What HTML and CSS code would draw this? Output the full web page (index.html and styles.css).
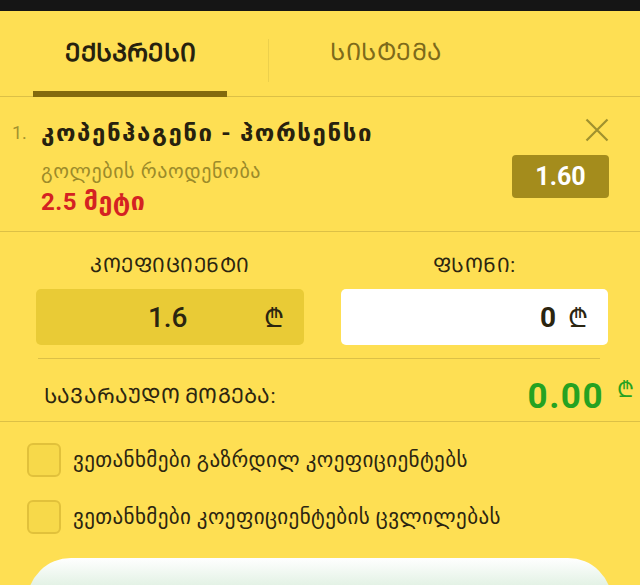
FILE: index.html
```html
<!DOCTYPE html>
<html lang="ka">
<head>
<meta charset="utf-8">
<title>Betslip</title>
<link rel="stylesheet" href="styles.css">
</head>
<body>
<div class="topbar"></div>
<div class="tabs">
  <div class="tab active"><span>ᲔᲥᲡᲞᲠᲔᲡᲘ</span></div>
  <div class="tab-sep"></div>
  <div class="tab"><span>ᲡᲘᲡᲢᲔᲛᲐ</span></div>
</div>
<div class="bet">
  <div class="bet-num">1.</div>
  <div class="bet-info">
    <div class="bet-title">კოპენჰაგენი - ჰორსენსი</div>
    <div class="bet-market">გოლების რაოდენობა</div>
    <div class="bet-pick"><span class="num">2.5</span> მეტი</div>
  </div>
  <div class="bet-side">
    <svg class="close" width="24" height="24" viewBox="0 0 24 24"><path d="M1.5 1.5 L22.5 22.5 M22.5 1.5 L1.5 22.5" stroke="#a0912e" stroke-width="2.2" fill="none"/></svg>
    <div class="odd">1.60</div>
  </div>
</div>
<div class="stake">
  <div class="fields">
    <div class="field">
      <div class="field-label">ᲙᲝᲔᲤᲘᲪᲘᲔᲜᲢᲘ</div>
      <div class="box box-odd"><span class="val">1.6</span><span class="lari">₾</span></div>
    </div>
    <div class="field">
      <div class="field-label">ᲤᲡᲝᲜᲘ:</div>
      <div class="box box-stake"><span class="val">0</span><span class="lari">₾</span></div>
    </div>
  </div>
  <div class="win">
    <span class="win-label">ᲡᲐᲕᲐᲠᲐᲣᲓᲝ ᲛᲝᲒᲔᲑᲐ:</span>
    <span class="win-val">0.00<span class="win-lari">₾</span></span>
  </div>
</div>
<div class="checks">
  <label class="check"><span class="cb"></span><span>ვეთანხმები გაზრდილ კოეფიციენტებს</span></label>
  <label class="check"><span class="cb"></span><span>ვეთანხმები კოეფიციენტების ცვლილებას</span></label>
  <div class="button"></div>
</div>
</body>
</html>
```
FILE: styles.css
```css
html, body {
  margin: 0;
  padding: 0;
}
body {
  width: 640px;
  height: 585px;
  overflow: hidden;
  background: #fedf53;
  font-family: "Roboto", "DejaVu Sans", sans-serif;
  color: #2b2510;
}
.topbar {
  height: 11px;
  background: #151515;
}
.tabs {
  display: flex;
  align-items: stretch;
  border-bottom: 1px solid #dcc046;
  box-sizing: border-box;
  height: 86px;
}
.tab {
  display: flex;
  align-items: center;
  font-size: 24px;
  color: #7d6a1a;
  padding-bottom: 6px;
}
.tab.active {
  margin-left: 33px;
  width: 194px;
  box-sizing: border-box;
  justify-content: center;
  font-size: 25px;
  font-weight: bold;
  color: #27210e;
  border-bottom: 6px solid #836a0d;
  padding-bottom: 0;
  margin-bottom: -1px;
}
.tab-sep {
  width: 1px;
  margin: 28px 0 14px 41px;
  background: #ecd04c;
}
.tab:last-child {
  margin-left: 61px;
  letter-spacing: 0.5px;
}
.bet {
  display: flex;
  height: 135px;
  border-bottom: 1px solid #dcc046;
  box-sizing: border-box;
}
.bet-num {
  width: 41px;
  padding: 22px 0 0 12px;
  box-sizing: border-box;
  font-size: 18px;
  line-height: 28px;
  color: #a3922e;
}
.bet-info {
  flex: 1;
  padding-top: 22px;
}
.bet-title {
  font-size: 24px;
  font-weight: bold;
  letter-spacing: 1.6px;
  color: #27210e;
  line-height: 28px;
}
.bet-market {
  margin-top: 12px;
  font-size: 20px;
  letter-spacing: 0.6px;
  color: #9c8b2a;
  line-height: 24px;
}
.bet-pick {
  margin-top: 7px;
  font-size: 25px;
  font-weight: bold;
  color: #d42222;
  line-height: 24px;
  letter-spacing: 0.5px;
}
.bet-pick .num {
  font-size: 24px;
  letter-spacing: 0.5px;
}
.bet-side {
  display: flex;
  flex-direction: column;
  align-items: flex-end;
  padding: 21px 31px 0 0;
}
.odd {
  margin-top: 13px;
  width: 97px;
  height: 43px;
  border-radius: 4px;
  background: #a48c1c;
  color: #fff;
  font-weight: bold;
  font-size: 25px;
  display: flex;
  align-items: center;
  justify-content: center;
}
.stake {
  border-bottom: 1px solid #dcc046;
}
.fields {
  display: flex;
  gap: 37px;
  padding-bottom: 13px;
  border-bottom: 1px solid #dcc046;
  margin: 0 40px 0 38px;
}
.field {
  flex: 1;
  display: flex;
  flex-direction: column;
}
.field:first-child {
  margin-left: -2px;
}
.field:last-child {
  margin-right: -8px;
}
.field-label {
  text-align: center;
  font-size: 20px;
  letter-spacing: 0.5px;
  line-height: 24px;
  padding-top: 21px;
  margin-bottom: 12px;
}
.box {
  height: 56px;
  border-radius: 5px;
  display: flex;
  align-items: center;
  justify-content: flex-end;
  font-size: 28px;
  padding-right: 20px;
}
.box-odd {
  background: #e9cb36;
}
.box-odd .val {
  font-weight: 500;
  margin-right: 76px;
}
.box-stake {
  background: #ffffff;
}
.box-stake .val {
  font-weight: bold;
  margin-right: 12px;
}
.lari {
  font-family: "DejaVu Sans", sans-serif;
  font-size: 26px;
}
.win {
  display: flex;
  align-items: center;
  justify-content: space-between;
  padding: 9px 6px 0 44px;
  height: 62px;
  box-sizing: border-box;
}
.win-label {
  font-size: 21px;
  letter-spacing: 0.2px;
}
.win-val {
  font-size: 35px;
  font-weight: bold;
  letter-spacing: 1.5px;
  color: #26a221;
}
.win-lari {
  font-family: "DejaVu Sans", sans-serif;
  font-size: 22px;
  font-weight: normal;
  vertical-align: 11px;
  margin-left: 13px;
  letter-spacing: 0;
}
.checks {
  padding: 21px 28px 0 27px;
  display: flex;
  flex-direction: column;
}
.check {
  display: flex;
  align-items: center;
  gap: 12px;
  font-size: 21px;
  letter-spacing: 0.4px;
  color: #2b2510;
  height: 34px;
  margin-bottom: 23px;
}
.cb {
  width: 34px;
  height: 34px;
  box-sizing: border-box;
  border: 2px solid #e1c13b;
  border-radius: 6px;
  background: #f7d94a;
  flex: none;
}
.button {
  margin-top: 1px;
  height: 60px;
  border-radius: 44px 44px 0 0;
  background: linear-gradient(#ffffff, #c2e2c6);
}
```
